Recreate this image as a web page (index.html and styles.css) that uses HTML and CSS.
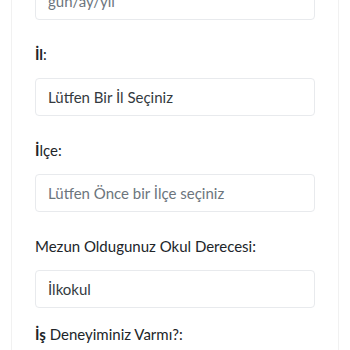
FILE: index.html
```html
<!DOCTYPE html>
<html lang="tr">
<head>
<meta charset="utf-8">
<link rel="stylesheet" href="styles.css">
</head>
<body>
<div class="card">
  <div class="group">
    <div class="field muted">gün/ay/yıl</div>
  </div>
  <div class="group">
    <label class="label"><b>İl</b>:</label>
    <div class="field">Lütfen Bir İl Seçiniz</div>
  </div>
  <div class="group">
    <label class="label"><b>İ</b>lçe:</label>
    <div class="field muted">Lütfen Önce bir İlçe seçiniz</div>
  </div>
  <div class="group">
    <label class="label">Mezun Oldugunuz Okul Derecesi:</label>
    <div class="field">İlkokul</div>
  </div>
  <div class="group group-radio">
    <label class="label"><b>İş</b> Deneyiminiz Varmı?:</label>
  </div>
</div>
</body>
</html>
```
FILE: styles.css
```css
html, body {
  margin: 0;
  padding: 0;
  background: #ffffff;
  overflow: hidden;
}
body {
  font-family: "Lato", "Noto Sans", sans-serif;
  color: #212529;
}
.card {
  margin: -19px 11px 0 11px;
  border: 1px solid #f1f1f1;
  border-radius: 6px;
  padding: 0 23px 40px 23px;
  min-height: 420px;
  background: #fff;
}
.group {
  margin-bottom: 22px;
}
.group-radio {
  margin-top: -8px;
}
.label {
  display: block;
  font-size: 15px;
  line-height: 24px;
  margin-bottom: 12px;
  color: #212529;
}
.label b {
  font-weight: 700;
}
.field {
  height: 36px;
  border: 1px solid #e8eaed;
  border-radius: 4px;
  padding: 0 12px;
  font-size: 15px;
  line-height: 36px;
  color: #343a40;
  background: #fff;
}
.field.muted {
  color: #6c757d;
}
```
